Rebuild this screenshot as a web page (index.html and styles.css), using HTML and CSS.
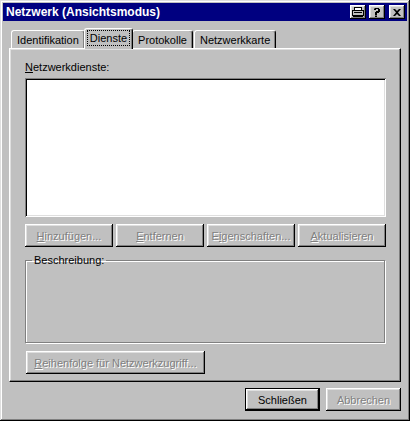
FILE: index.html
```html
<!DOCTYPE html>
<html lang="de">
<head>
    <meta charset="UTF-8">
    <title>Netzwerk (Ansichtsmodus)</title>
    <link rel="stylesheet" href="styles.css">
</head>
<body>

    <div class="window">
        <div class="titlebar">
            <span class="title">Netzwerk (Ansichtsmodus)</span>
            <div class="title-buttons">
                <span class="tbtn print">
                    <svg width="12" height="10" viewBox="0 0 12 10">
                        <rect x="2.5" y="0.5" width="7" height="3" fill="#fff" stroke="#000"/>
                        <rect x="0.5" y="3.5" width="11" height="5" fill="#c0c0c0" stroke="#000"/>
                        <rect x="1" y="8" width="10" height="2" fill="#000"/>
                        <rect x="2" y="5" width="8" height="1" fill="#000"/>
                    </svg>
                </span>
                <span class="tbtn">
                    <svg width="8" height="9" viewBox="0 0 8 9">
                        <path d="M1 0h5v1h1v3h-1v1h-2v2h-2v-3h1v-1h2v-2h-2v1h-2v-1h1z" fill="#000"/>
                        <rect x="2" y="7.5" width="2" height="1.5" fill="#000"/>
                    </svg>
                </span>
                <span class="tbtn close">
                    <svg width="8" height="7" viewBox="0 0 8 7">
                        <path d="M0 0h2l2 2 2-2h2l-3 3.5 3 3.5h-2l-2-2-2 2h-2l3-3.5z" fill="#000"/>
                    </svg>
                </span>
            </div>
        </div>

        <div class="tabs">
            <span class="tab">Identifikation</span>
            <span class="tab active"><span class="focus">Dienste</span></span>
            <span class="tab">Protokolle</span>
            <span class="tab">Netzwerkkarte</span>
        </div>

        <div class="panel">
            <div class="label"><u>N</u>etzwerkdienste:</div>
            <div class="listbox"></div>

            <div class="button-row">
                <button class="btn" disabled><u>H</u>inzufügen...</button>
                <button class="btn" disabled><u>E</u>ntfernen</button>
                <button class="btn" disabled>E<u>i</u>genschaften...</button>
                <button class="btn" disabled><u>A</u>ktualisieren</button>
            </div>

            <fieldset class="group">
                <legend>Beschreibung:</legend>
            </fieldset>

            <button class="btn wide" disabled><u>R</u>eihenfolge für Netzwerkzugriff...</button>
        </div>

        <div class="footer">
            <button class="btn default">Schließen</button>
            <button class="btn" disabled>Abbrechen</button>
        </div>
    </div>

</body>
</html>
```

FILE: styles.css
```css
body {
    margin: 0;
    background-color: #c0c0c0;
    font-family: 'Liberation Sans', Arial, sans-serif;
    font-size: 11px;
    color: #000;
}
.window {
    width: 410px;
    height: 421px;
    box-sizing: border-box;
    padding: 3px;
    background-color: #c0c0c0;
    box-shadow: inset -1px -1px #000, inset 1px 1px #dfdfdf, inset -2px -2px #808080, inset 2px 2px #fff;
}
.titlebar {
    height: 18px;
    background-color: #000080;
    color: #fff;
    display: flex;
    align-items: center;
    justify-content: space-between;
    padding: 0 2px 0 3px;
}
.title {
    font-weight: bold;
    font-size: 12px;
}
.title-buttons {
    display: flex;
    gap: 2px;
}
.tbtn {
    width: 16px;
    height: 14px;
    box-sizing: border-box;
    background-color: #c0c0c0;
    display: flex;
    align-items: center;
    justify-content: center;
    box-shadow: inset -1px -1px #000, inset 1px 1px #fff, inset -2px -2px #808080, inset 2px 2px #dfdfdf;
}
.tbtn.print {
    margin-right: 1px;
}
.tbtn.close {
    margin-left: 2px;
}

/* Reiter */
.tabs {
    display: flex;
    align-items: flex-end;
    height: 21px;
    margin: 6px 6px 0 8px;
    position: relative;
    z-index: 1;
}
.tab {
    height: 18px;
    box-sizing: border-box;
    padding: 2px 5px 0 5px;
    border-left: 1px solid #fff;
    border-top: 1px solid #fff;
    border-right: 1px solid #000;
    border-radius: 3px 3px 0 0;
    box-shadow: inset -1px 0 #808080;
    margin-right: 1px;
    line-height: 14px;
}
.tab.active {
    height: 21px;
    padding: 2px 3px 0 3px;
    margin: 0 -1px -1px -2px;
    background-color: #c0c0c0;
    position: relative;
}
.focus {
    display: inline-block;
    outline: 1px dotted #000;
    padding: 0 2px;
    line-height: 14px;
}
.panel {
    margin: 0 6px;
    height: 334px;
    box-sizing: border-box;
    padding: 12px 14px 0 15px;
    border-left: 1px solid #fff;
    border-top: 1px solid #fff;
    border-right: 1px solid #000;
    border-bottom: 1px solid #000;
    box-shadow: inset -1px -1px #808080, inset 1px 1px #dfdfdf;
}
.label {
    height: 17px;
}
.listbox {
    height: 139px;
    background-color: #fff;
    box-shadow: inset 1px 1px #808080, inset -1px -1px #fff, inset 2px 2px #000, inset -2px -2px #dfdfdf;
}
.button-row {
    display: grid;
    grid-template-columns: repeat(4, 1fr);
    gap: 3px;
    margin-top: 7px;
}
.btn {
    height: 23px;
    font-family: inherit;
    font-size: 11px;
    background-color: #c0c0c0;
    border: none;
    padding: 0;
    color: #000;
    box-shadow: inset -1px -1px #000, inset 1px 1px #fff, inset -2px -2px #808080, inset 2px 2px #dfdfdf;
}
.btn:disabled {
    color: #808080;
    text-shadow: 1px 1px #fff;
}
.group {
    margin: 7px 1px 0 0;
    height: 89px;
    box-sizing: border-box;
    padding: 0;
    border: 1px solid #808080;
    box-shadow: inset 1px 1px #fff, 1px 1px #fff;
}
.group legend {
    margin-left: 6px;
    padding: 0 2px;
}
.wide {
    display: block;
    width: 179px;
    margin: 8px 0 0 1px;
}
.footer {
    display: flex;
    justify-content: flex-end;
    gap: 6px;
    margin: 6px 6px 0 0;
}
.footer .btn {
    width: 75px;
}
.btn.default {
    outline: 1px solid #000;
    outline-offset: -1px;
    box-shadow: inset -2px -2px #000, inset 2px 2px #fff, inset -3px -3px #808080, inset 3px 3px #dfdfdf;
}
```
